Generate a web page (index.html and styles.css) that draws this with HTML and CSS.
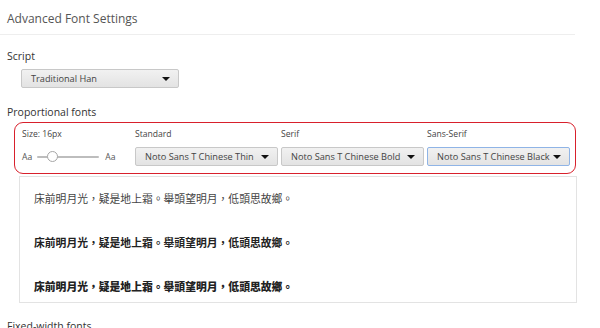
FILE: index.html
```html
<!DOCTYPE html>
<html lang="en">
<head>
    <meta charset="UTF-8">
    <meta name="viewport" content="width=device-width, initial-scale=1.0">
    <title>Advanced Font Settings</title>
    <link rel="stylesheet" href="styles.css">
</head>
<body>
    <div class="page">
        <div class="header">
            <h1>Advanced Font Settings</h1>
        </div>

        <div class="section-title script-title">Script</div>
        <div class="select script-select">
            <span>Traditional Han</span>
            <span class="arrow"></span>
        </div>

        <div class="section-title prop-title">Proportional fonts</div>
        <div class="font-box">
            <div class="col col-size">
                <div class="col-label">Size: 16px</div>
                <div class="slider-row">
                    <span class="aa">Aa</span>
                    <div class="slider">
                        <div class="track"></div>
                        <div class="knob"></div>
                    </div>
                    <span class="aa">Aa</span>
                </div>
            </div>
            <div class="col">
                <div class="col-label">Standard</div>
                <div class="select">
                    <span>Noto Sans T Chinese Thin</span>
                    <span class="arrow"></span>
                </div>
            </div>
            <div class="col">
                <div class="col-label">Serif</div>
                <div class="select">
                    <span>Noto Sans T Chinese Bold</span>
                    <span class="arrow"></span>
                </div>
            </div>
            <div class="col">
                <div class="col-label">Sans-Serif</div>
                <div class="select focused">
                    <span>Noto Sans T Chinese Black</span>
                    <span class="arrow"></span>
                </div>
            </div>
        </div>

        <div class="sample">
            <p class="thin">床前明月光，疑是地上霜。舉頭望明月，低頭思故鄉。</p>
            <p class="bold">床前明月光，疑是地上霜。舉頭望明月，低頭思故鄉。</p>
            <p class="black">床前明月光，疑是地上霜。舉頭望明月，低頭思故鄉。</p>
        </div>

        <div class="section-title fixed-title">Fixed-width fonts</div>
    </div>
</body>
</html>
```

FILE: styles.css
```css
body {
    margin: 0;
    background: #fff;
    font-family: "Open Sans", "Noto Sans", sans-serif;
    color: #333;
    overflow: hidden;
}

.page {
    width: 590px;
}

.header {
    height: 35px;
    width: 575px;
    border-bottom: 1px solid #eeeeee;
    box-sizing: border-box;
    padding: 10px 0 0 7px;
}

h1 {
    margin: 0;
    font-size: 12px;
    font-weight: normal;
    line-height: 18px;
    color: #555;
}

.section-title {
    font-size: 10.5px;
    line-height: 16px;
    padding-left: 7px;
    color: #333;
}

.script-title {
    margin-top: 13px;
}

.prop-title {
    margin-top: 16px;
}

.fixed-title {
    margin-top: 15px;
}

.select {
    display: flex;
    align-items: center;
    justify-content: space-between;
    box-sizing: border-box;
    height: 19px;
    padding: 0 8px 0 9px;
    border: 1px solid #c8c8c8;
    border-radius: 2px;
    background: linear-gradient(#f1f1f1, #e3e3e3);
    font-size: 9.2px;
    color: #444;
    white-space: nowrap;
}

.select.focused {
    border-color: #8fb4e6;
}

.arrow {
    width: 0;
    height: 0;
    border-left: 4px solid transparent;
    border-right: 4px solid transparent;
    border-top: 4px solid #111;
}

.script-select {
    width: 158px;
    margin: 5px 0 0 21px;
}

.font-box {
    display: flex;
    box-sizing: border-box;
    width: 562px;
    height: 52px;
    margin: 2px 0 0 14px;
    padding: 4px 0 0 7px;
    border: 1.5px solid #d8202c;
    border-radius: 9px;
}

.col {
    width: 146px;
}

.col-size {
    width: 113px;
}

.col .select {
    width: 143px;
}

.col-label {
    font-size: 8.6px;
    line-height: 14px;
    color: #444;
    margin-bottom: 6px;
}

.slider-row {
    display: flex;
    align-items: center;
    height: 19px;
    font-size: 8.6px;
    color: #555;
}

.slider {
    position: relative;
    width: 62px;
    height: 12px;
    margin: 0 6px 0 5px;
}

.track {
    margin-top: 5px;
    height: 2px;
    background: #bdbdbd;
    border-radius: 1px;
}

.knob {
    position: absolute;
    left: 10px;
    top: 0;
    width: 9px;
    height: 9px;
    border: 1px solid #a6a6a6;
    border-radius: 50%;
    background: #fff;
}

.sample {
    box-sizing: border-box;
    width: 558px;
    height: 127px;
    margin: 2px 0 0 19px;
    padding: 13px 0 0 14px;
    border: 1px solid #e3e3e3;
    font-family: "Noto Sans CJK TC", sans-serif;
    font-size: 10.8px;
    color: #222;
}

.sample p {
    margin: 0 0 28px;
    line-height: 16px;
}

.sample .thin {
    font-weight: 400;
    color: #444;
}

.sample .bold {
    font-weight: 700;
}

.sample .black {
    font-weight: 900;
}
```
